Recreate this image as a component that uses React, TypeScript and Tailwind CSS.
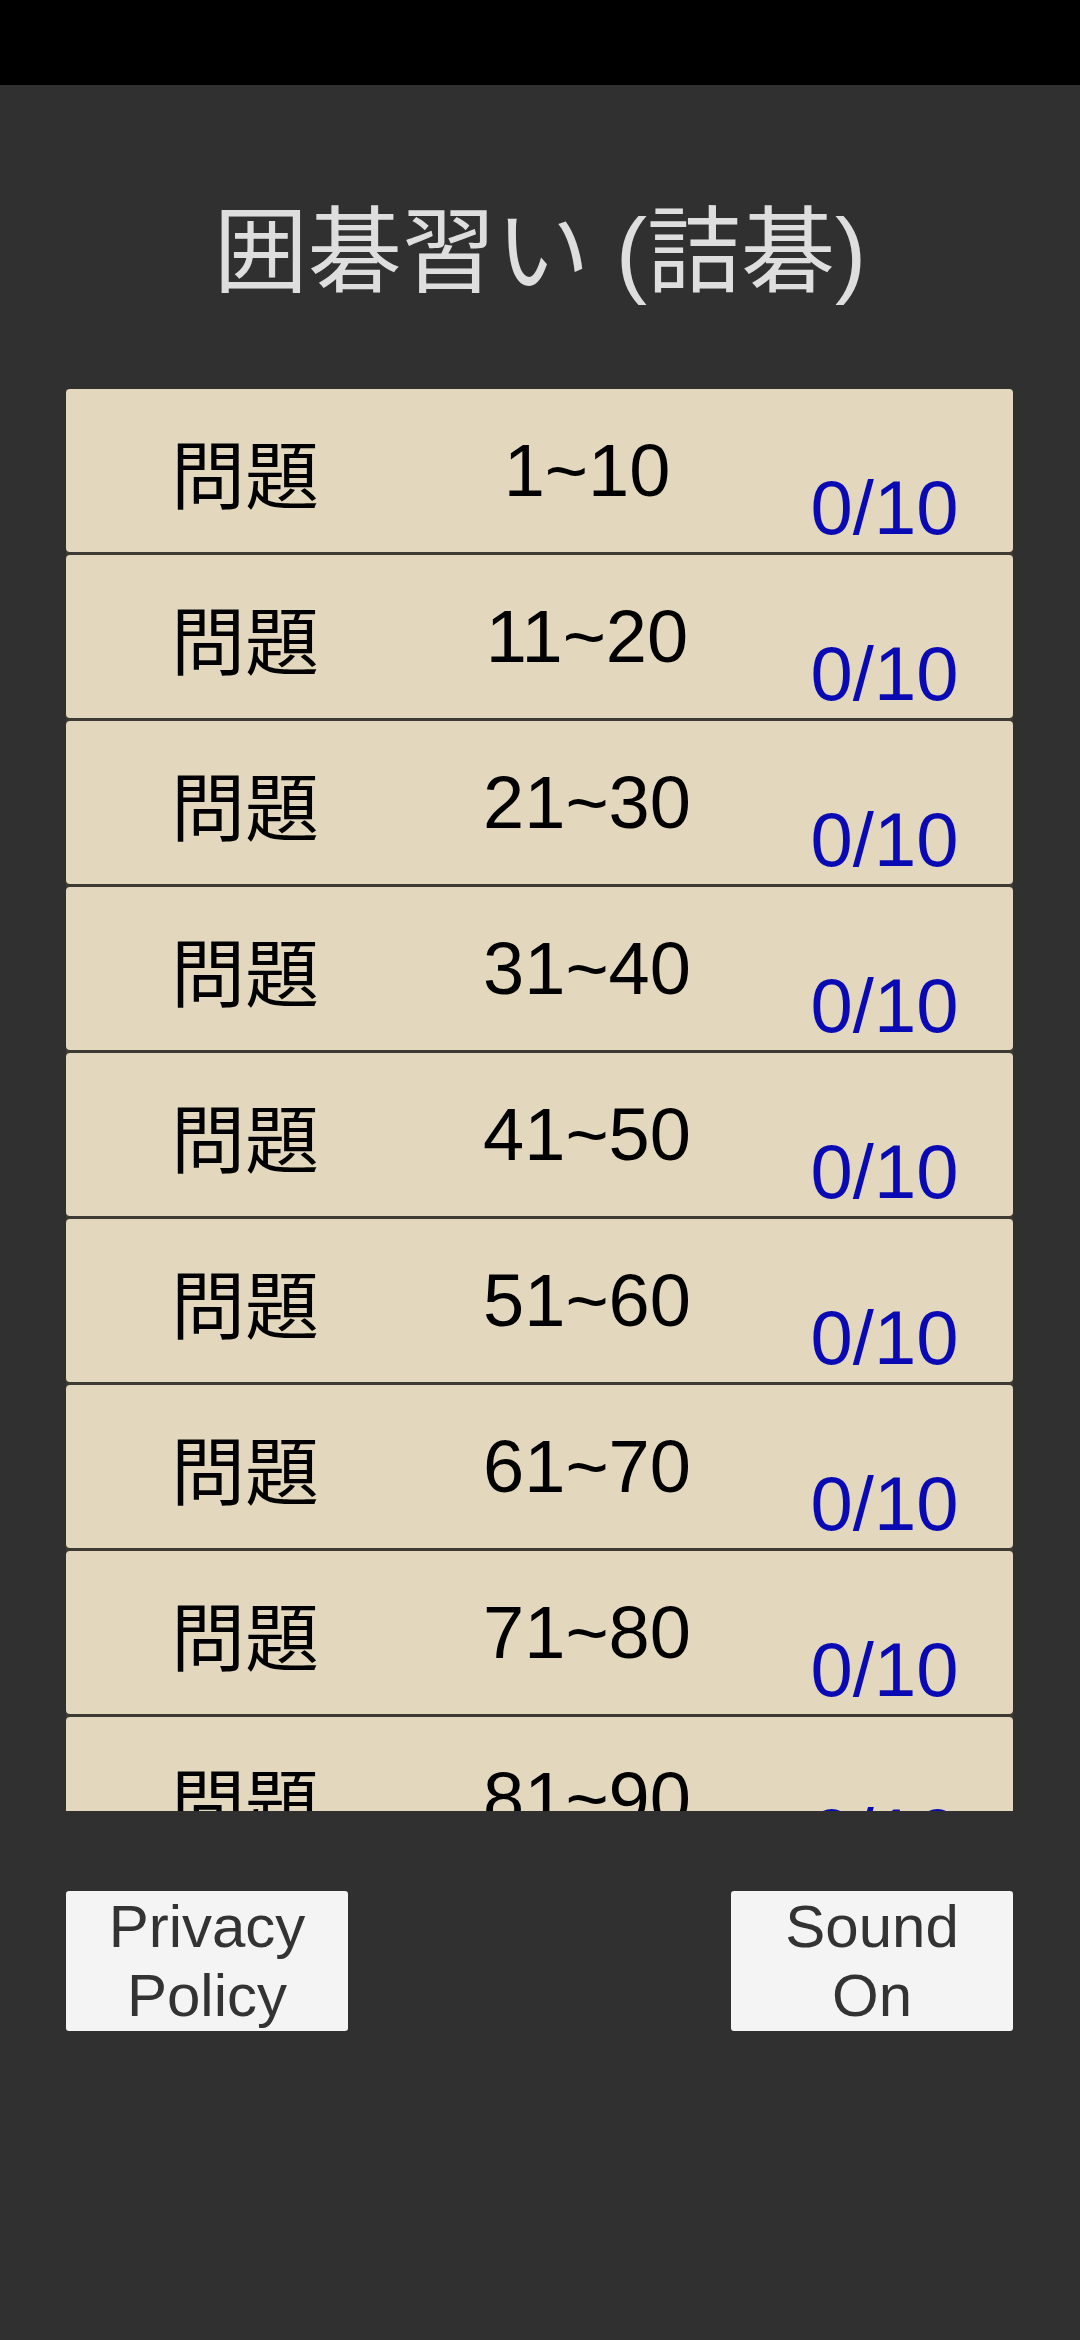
import React from "react";

// ─── Data ─────────────────────────────────────────────────────────────────────

const RANGES = ["1~10", "11~20", "21~30", "31~40", "41~50", "51~60", "61~70", "71~80", "81~90", "91~100"];

const LATIN = { fontFamily: '"Liberation Sans", "Noto Sans CJK JP", sans-serif' };
const CJK = { fontFamily: '"Noto Sans CJK JP", "Liberation Sans", sans-serif' };

// ─── Problem row ──────────────────────────────────────────────────────────────

function ProblemRow({ range, solved }: { range: string; solved: number }) {
  return (
    <div className="flex h-[163px] shrink-0 items-center rounded-[4px] bg-[#e3d8be] text-black">
      <div className="w-[358px] text-center text-[74px] leading-none" style={CJK}>
        問題
      </div>
      <div className="w-[326px] text-center text-[74px] leading-none" style={LATIN}>
        {range}
      </div>
      <div
        className="flex-1 self-end pb-[6px] pl-[6px] text-center text-[76px] leading-none text-[#0a0ab4]"
        style={LATIN}
      >
        {solved}/10
      </div>
    </div>
  );
}

// ─── Footer button ────────────────────────────────────────────────────────────

function FooterButton({ lines }: { lines: string[] }) {
  return (
    <button
      className="flex h-[140px] w-[282px] flex-col items-center justify-center rounded-[3px] bg-[#f4f4f4] text-[60px] leading-[69px] text-[#333333]"
      style={LATIN}
    >
      {lines.map((l) => (
        <span key={l}>{l}</span>
      ))}
    </button>
  );
}

// ─── Main ─────────────────────────────────────────────────────────────────────

export default function App() {
  return (
    <div className="flex h-[2340px] w-[1080px] flex-col bg-[#303030]">
      {/* status bar */}
      <div className="h-[85px] shrink-0 bg-black" />

      {/* title */}
      <div
        className="h-[304px] shrink-0 pt-[121px] text-center text-[94px] leading-[94px] text-[#dedede]"
        style={LATIN}
      >
        囲碁習い (詰碁)
      </div>

      {/* problem list (scrolls) */}
      <div className="mx-[66px] flex h-[1422px] w-[947px] flex-col gap-[3px] overflow-hidden bg-[#3d3a33]">
        {RANGES.map((r) => (
          <ProblemRow key={r} range={r} solved={0} />
        ))}
      </div>

      {/* bottom buttons */}
      <div className="mx-[66px] mt-[80px] flex w-[947px] justify-between">
        <FooterButton lines={["Privacy", "Policy"]} />
        <FooterButton lines={["Sound", "On"]} />
      </div>
    </div>
  );
}
